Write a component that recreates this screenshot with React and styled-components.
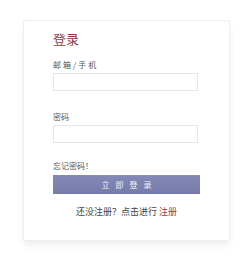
import React from "react";
import styled, { createGlobalStyle } from "styled-components";

const Global = createGlobalStyle`
  html, body {
    margin: 0;
    padding: 0;
    background: #ffffff;
    font-family: "Noto Sans CJK SC", "Liberation Sans", sans-serif;
  }
`;

const Page = styled.div`
  width: 249px;
  height: 262px;
  padding: 20px 0 0 23px;
  box-sizing: border-box;
`;

const Card = styled.div`
  width: 207px;
  height: 221px;
  box-sizing: border-box;
  border: 1px solid #f0eeee;
  border-radius: 2px;
  background: #fff;
  box-shadow: 0 5px 6px rgba(0, 0, 0, 0.06);
  padding: 9px 0 0 29px;
  display: flex;
  flex-direction: column;
`;

const Title = styled.h1`
  margin: 0;
  font-size: 13px;
  font-weight: normal;
  line-height: 18px;
  color: #8e3b3f;
`;

const Label = styled.label`
  display: block;
  font-size: 8px;
  line-height: 10px;
  color: #555;
  letter-spacing: ${(p) => (p.$spaced ? "2px" : "0")};
  margin-top: ${(p) => p.$top}px;
`;

const Input = styled.input`
  display: block;
  width: 145px;
  height: 18px;
  box-sizing: border-box;
  border: 1px solid #e6e6e6;
  margin: ${(p) => p.$top}px 0 0 0;
  padding: 0 4px;
  outline: none;
`;

const Button = styled.button`
  width: 147px;
  height: 19px;
  margin-top: 4px;
  border: none;
  background: linear-gradient(#8589b8, #767ba9);
  color: #f4f4fa;
  font-family: inherit;
  font-size: 8px;
  letter-spacing: 6px;
  padding: 0 0 0 6px;
  cursor: pointer;
`;

const Footer = styled.p`
  margin: 12px 0 0 0;
  width: 147px;
  text-align: center;
  font-size: 9px;
  line-height: 12px;
  color: #444;
`;

const Link = styled.a`
  color: #a33a42;
  text-decoration: none;
`;

export default function App() {
  return (
    <>
      <Global />
      <Page>
        <Card>
          <Title>登录</Title>
          <Label $spaced $top={12}>邮箱/手机</Label>
          <Input $top={3} />
          <Label $top={21}>密码</Label>
          <Input $top={3} />
          <Label $top={18}>忘记密码！</Label>
          <Button>立即登录</Button>
          <Footer>
            还没注册？点击进行 <Link href="#">注册</Link>
          </Footer>
        </Card>
      </Page>
    </>
  );
}
